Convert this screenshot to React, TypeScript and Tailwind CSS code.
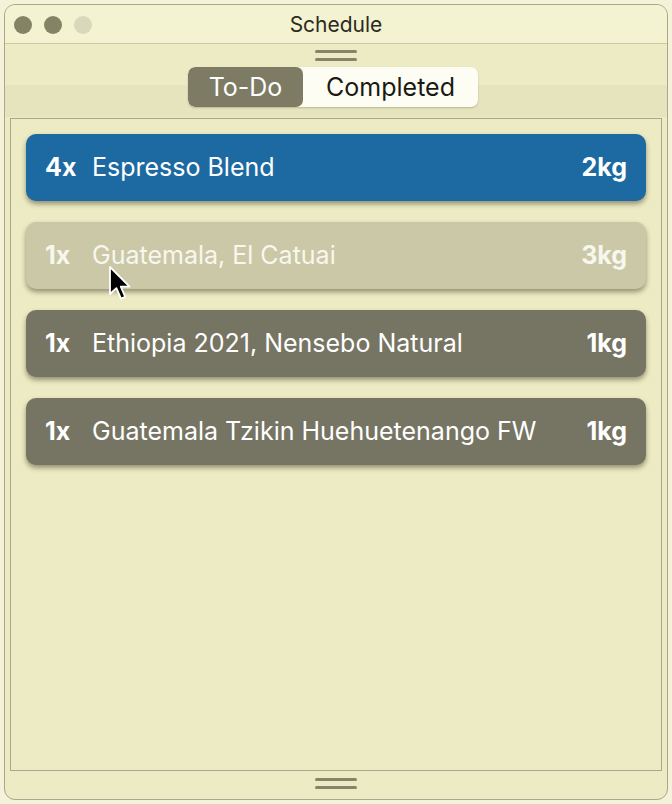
import React from 'react';

type Bean = { qty: string; name: string; weight: string; tone: 'active' | 'hover' | 'idle' };

const beans: Bean[] = [
  { qty: '4x', name: 'Espresso Blend', weight: '2kg', tone: 'active' },
  { qty: '1x', name: 'Guatemala, El Catuai', weight: '3kg', tone: 'hover' },
  { qty: '1x', name: 'Ethiopia 2021, Nensebo Natural', weight: '1kg', tone: 'idle' },
  { qty: '1x', name: 'Guatemala Tzikin Huehuetenango FW', weight: '1kg', tone: 'idle' },
];

const toneClass = {
  active: 'bg-[#1d6aa3] text-white',
  hover: 'bg-[#cac8a6] text-[#f8f7ee]',
  idle: 'bg-[#767462] text-white',
};

function Handle() {
  return (
    <div className="flex flex-col items-center gap-[5px]">
      <div className="h-[3px] w-[42px] rounded-full bg-[#86846a]" />
      <div className="h-[3px] w-[42px] rounded-full bg-[#86846a]" />
    </div>
  );
}

// mouse pointer hovering the second row
function Cursor() {
  return (
    <svg className="absolute left-[108px] top-[265px] z-30" width="26" height="36" viewBox="0 0 13 18">
      <path d="M1 1 L1 14.5 L4.2 11.6 L6.5 16.8 L8.6 15.9 L6.4 10.8 L10.8 10.8 Z" fill="#000" stroke="#fff" strokeWidth="0.9" strokeLinejoin="round" />
    </svg>
  );
}

export default function App() {
  return (
    <div className="relative w-[672px] h-[804px] bg-[#f4f3da] p-[4px] font-['Inter',sans-serif]">
      <div className="flex h-full flex-col overflow-hidden rounded-[11px] border border-[#a9a78c] bg-[#ecebc3]">
        {/* title bar */}
        <div className="relative flex h-[39px] items-center justify-center border-b border-[#c9c7a6] bg-[#f3f2d1]">
          <div className="absolute left-[9px] top-[11px] flex gap-[12px]">
            <div className="h-[18px] w-[18px] rounded-full bg-[#858365]" />
            <div className="h-[18px] w-[18px] rounded-full bg-[#858365]" />
            <div className="h-[18px] w-[18px] rounded-full bg-[#d9d8bb]" />
          </div>
          <span className="pt-[2px] text-[21px] text-[#2b2a22]">Schedule</span>
        </div>

        <div className="flex justify-center pt-[6px]">
          <Handle />
        </div>

        <div className="relative mt-[6px] flex flex-1 flex-col">
          <div className="absolute left-0 right-0 top-[18px] h-[32px] bg-[#e5e4bd]" />
          {/* segmented control */}
          <div className="relative z-10 ml-[183px] flex h-[40px] w-[290px] overflow-hidden rounded-[7px] bg-[#fdfdf4] shadow-[0_1px_2px_rgba(0,0,0,0.2)]">
            <div className="flex w-[115px] items-center justify-center rounded-[7px] bg-[#7d7b64] pt-[2px] text-[25px] text-white">To-Do</div>
            <div className="flex flex-1 items-center justify-center pt-[2px] text-[25px] text-[#1a1a14]">Completed</div>
          </div>

          <div className="relative z-10 mx-[5px] mt-[11px] flex h-[653px] flex-col gap-[21px] border border-[#a8a68c] bg-[#ecebc3] px-[15px] pt-[15px]">
            {beans.map((b) => (
              <div
                key={b.name}
                className={`flex h-[67px] items-center rounded-[10px] pl-[19px] pr-[19px] pt-[1px] shadow-[0_3px_5px_rgba(40,38,20,0.45)] ${toneClass[b.tone]}`}
              >
                <span className="w-[47px] text-[25px] font-bold">{b.qty}</span>
                <span className="flex-1 text-[25px]">{b.name}</span>
                <span className="text-[25px] font-bold">{b.weight}</span>
              </div>
            ))}
          </div>

          <div className="flex justify-center pt-[7px]">
            <Handle />
          </div>
        </div>
      </div>
      <Cursor />
    </div>
  );
}
